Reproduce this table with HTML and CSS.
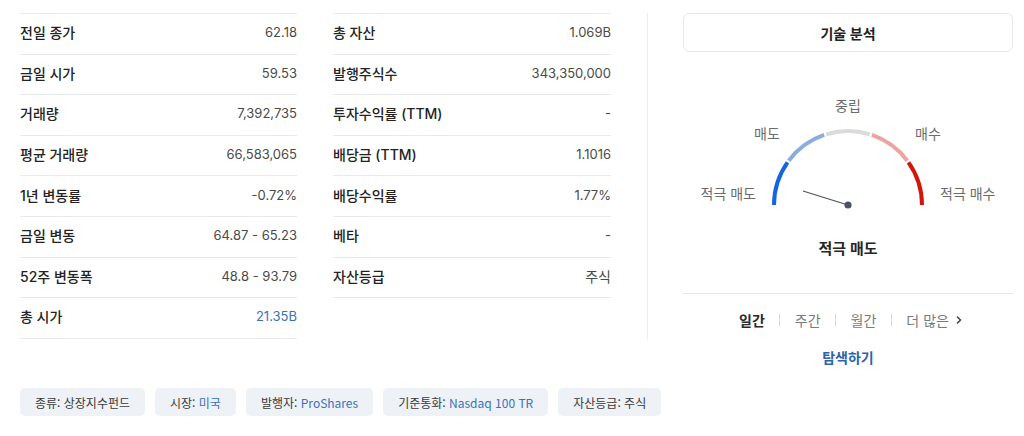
FILE: index.html
```html
<!DOCTYPE html>
<html lang="ko">
<head>
<meta charset="utf-8">
<link rel="stylesheet" href="styles.css">
</head>
<body>
<div class="page">
  <div class="top">
    <div class="table">
      <div class="row"><span class="lbl">전일 종가</span><span class="val">62.18</span></div>
      <div class="row"><span class="lbl">금일 시가</span><span class="val">59.53</span></div>
      <div class="row"><span class="lbl">거래량</span><span class="val">7,392,735</span></div>
      <div class="row"><span class="lbl">평균 거래량</span><span class="val">66,583,065</span></div>
      <div class="row"><span class="lbl">1년 변동률</span><span class="val">-0.72%</span></div>
      <div class="row"><span class="lbl">금일 변동</span><span class="val">64.87 - 65.23</span></div>
      <div class="row"><span class="lbl">52주 변동폭</span><span class="val">48.8 - 93.79</span></div>
      <div class="row"><span class="lbl">총 시가</span><span class="val link">21.35B</span></div>
    </div>
    <div class="table">
      <div class="row"><span class="lbl">총 자산</span><span class="val">1.069B</span></div>
      <div class="row"><span class="lbl">발행주식수</span><span class="val">343,350,000</span></div>
      <div class="row"><span class="lbl">투자수익률 (TTM)</span><span class="val">-</span></div>
      <div class="row"><span class="lbl">배당금 (TTM)</span><span class="val">1.1016</span></div>
      <div class="row"><span class="lbl">배당수익률</span><span class="val">1.77%</span></div>
      <div class="row"><span class="lbl">베타</span><span class="val">-</span></div>
      <div class="row"><span class="lbl">자산등급</span><span class="val kr">주식</span></div>
    </div>
    <div class="divider"></div>
    <div class="tech">
      <div class="tech-head">기술 분석</div>
      <svg class="gauge" width="330" height="170" viewBox="0 0 330 170">
        <g fill="none" stroke-width="4">
          <path d="M91 153 A74 74 0 0 1 104.53 110.35" stroke="#1565e0"/>
          <path d="M105.73 108.69 A74 74 0 0 1 141.15 82.95" stroke="#8badde"/>
          <path d="M143.12 82.31 A74 74 0 0 1 186.88 82.31" stroke="#dadada"/>
          <path d="M188.85 82.95 A74 74 0 0 1 224.27 108.69" stroke="#eda39e"/>
          <path d="M225.47 110.35 A74 74 0 0 1 239 153" stroke="#d3160b"/>
        </g>
        <line x1="120" y1="139" x2="165" y2="153" stroke="#4b5366" stroke-width="1.3"/>
        <circle cx="165" cy="153" r="3.6" fill="#4b5366"/>
        <g class="glabel">
          <text x="73" y="147" text-anchor="end">적극 매도</text>
          <text x="84" y="87" text-anchor="middle">매도</text>
          <text x="165" y="59" text-anchor="middle">중립</text>
          <text x="245" y="87" text-anchor="middle">매수</text>
          <text x="257" y="147" text-anchor="start">적극 매수</text>
        </g>
      </svg>
      <div class="result">적극 매도</div>
      <div class="hr"></div>
      <div class="tabs">
        <span class="tab active">일간</span>
        <span class="sep"></span>
        <span class="tab">주간</span>
        <span class="sep"></span>
        <span class="tab">월간</span>
        <span class="sep"></span>
        <span class="tab">더 많은 <svg class="chev" width="8" height="10" viewBox="0 0 8 10"><path d="M2.5 2 L5.5 5 L2.5 8" fill="none" stroke="#444" stroke-width="1.6" stroke-linecap="round" stroke-linejoin="round"/></svg></span>
      </div>
      <div class="explore">탐색하기</div>
    </div>
  </div>
  <div class="chips">
    <span class="chip">종류: 상장지수펀드</span>
    <span class="chip">시장: <span class="blue">미국</span></span>
    <span class="chip">발행자: <span class="blue">ProShares</span></span>
    <span class="chip">기준통화: <span class="blue">Nasdaq 100 TR</span></span>
    <span class="chip">자산등급: 주식</span>
  </div>
</div>
</body>
</html>
```
FILE: styles.css
```css
* { box-sizing: border-box; }
body {
  margin: 0;
  background: #fff;
  font-family: "Inter", "Noto Sans CJK KR", sans-serif;
  color: #222;
}
.page {
  padding: 13px 11px 0 20px;
  width: 1024px;
  height: 436px;
  overflow: hidden;
}
.top {
  display: flex;
  align-items: flex-start;
}
.table {
  width: 277px;
  border-top: 1px solid #e8eaed;
  margin-right: 36px;
}
.table + .table { width: 278px; }
.row {
  height: 40.6px;
  padding-bottom: 3px;
  border-bottom: 1px solid #e8eaed;
  display: flex;
  align-items: center;
  justify-content: space-between;
}
.lbl {
  font-size: 14px;
  font-weight: 500;
  color: #232323;
}
.val {
  font-size: 13px;
  color: #4a4a4a;
}
.val.kr { font-size: 14px; }
.val.link { color: #3a72ba; }
.divider {
  width: 1px;
  height: 327px;
  background: #eceef0;
  margin-right: 35px;
}
.tech {
  width: 330px;
  display: flex;
  flex-direction: column;
  align-items: center;
}
.tech-head {
  width: 100%;
  height: 39px;
  border: 1px solid #e6e8eb;
  border-radius: 6px;
  display: flex;
  align-items: center;
  justify-content: center;
  font-size: 14px;
  font-weight: 600;
  color: #222;
}
.gauge { display: block; }
.glabel text {
  font-family: "Inter", "Noto Sans CJK KR", sans-serif;
  font-size: 14px;
  fill: #6b6b6b;
}
.result {
  margin-top: 16px;
  line-height: 22px;
  font-size: 15px;
  font-weight: 600;
  color: #262626;
}
.hr {
  width: 100%;
  height: 1px;
  background: #e4e6e9;
  margin-top: 33px;
}
.tabs {
  margin-top: 16px;
  height: 20px;
  display: flex;
  align-items: center;
  gap: 14.5px;
  font-size: 14px;
  color: #7a7a7a;
  margin-left: 6px;
}
.tab { display: flex; align-items: center; gap: 6px; }
.tab.active { color: #2a2a2a; font-weight: 600; }
.sep {
  width: 1px;
  height: 12px;
  background: #d6d8db;
}
.chev { display: block; }
.explore {
  margin-top: 18px;
  line-height: 20px;
  font-size: 14px;
  font-weight: 600;
  color: #2c64ae;
}
.chips {
  margin-top: 20px;
  display: flex;
  gap: 10px;
}
.chip {
  height: 28px;
  padding: 0 15px;
  background: #eef1f5;
  border-radius: 5px;
  display: flex;
  align-items: center;
  font-family: "Noto Sans CJK KR", sans-serif;
  font-size: 12px;
  color: #3a3a3a;
  white-space: pre;
}
.blue { color: #3a72ba; }
```
